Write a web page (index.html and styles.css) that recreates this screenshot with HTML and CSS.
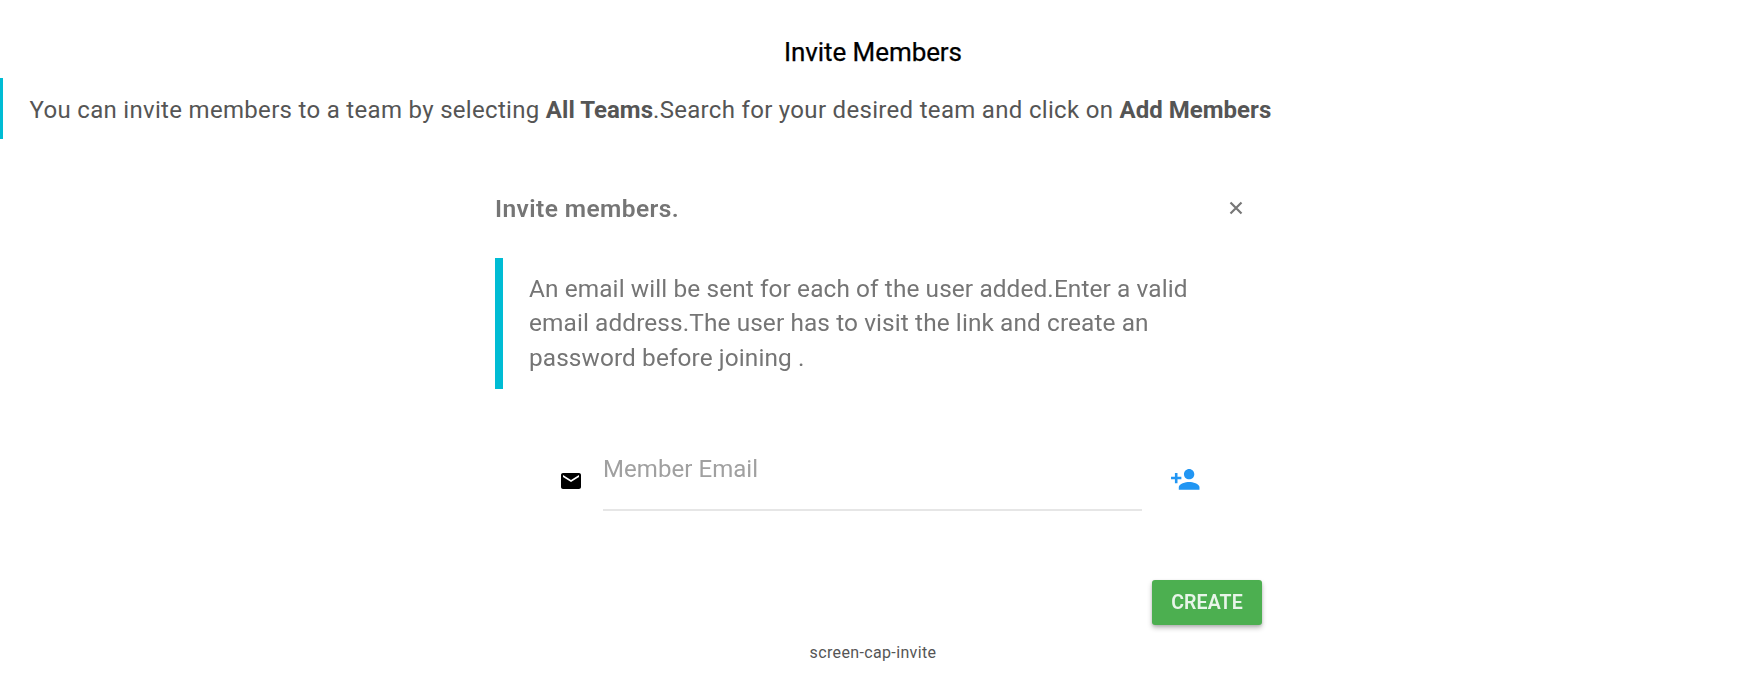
FILE: index.html
```html
<!DOCTYPE html>
<html lang="en">
<head>
<meta charset="utf-8">
<title>Invite Members</title>
<link rel="stylesheet" href="styles.css">
</head>
<body>
<main class="page">
  <h1 class="page-title">Invite Members</h1>
  <p class="intro"><span class="intro-text">You can invite members to a team by selecting <strong>All Teams</strong>.Search for your desired team and click on <strong>Add Members</strong></span></p>
  <section class="dialog">
    <header class="dialog-head">
      <h2 class="dialog-title"><span>Invite members.</span></h2>
      <svg class="close" viewBox="0 0 14 14"><path d="M1.500 1.500l11 11M12.500 1.500l-11 11"/></svg>
    </header>
    <p class="note"><span>An email will be sent for each of the user added.Enter a valid</span><br><span>email address.The user has to visit the link and create an</span><br><span>password before joining .</span></p>
    <div class="field-row">
      <svg class="mail" viewBox="2 4 20 16"><path d="M20 4H4c-1.100 0-1.990.9-1.990 2L2 18c0 1.100.9 2 2 2h16c1.100 0 2-.9 2-2V6c0-1.100-.9-2-2-2zm0 4l-8 5-8-5V6l8 5 8-5v2z"/></svg>
      <div class="field"><span>Member Email</span></div>
      <svg class="add" viewBox="1 4 22 16"><path d="M15 12c2.210 0 4-1.790 4-4s-1.790-4-4-4-4 1.790-4 4 1.790 4 4 4zm-9-2V7H4v3H1v2h3v3h2v-3h3v-2H6zm9 4c-2.670 0-8 1.340-8 4v2h16v-2c0-2.660-5.330-4-8-4z"/></svg>
    </div>
    <div class="actions"><button class="create">CREATE</button></div>
  </section>
  <p class="caption">screen-cap-invite</p>
</main>
</body>
</html>
```
FILE: styles.css
```css
* { box-sizing: border-box; }
body { margin: 0; background: #fff; color: #555; font-family: Roboto, "Liberation Sans", sans-serif; }
.page { display: flex; flex-direction: column; height: 690px; padding-top: 32px; }
h1, h2, p { margin: 0; }
.page-title { height: 46px; font-size: 26px; line-height: 40px; font-weight: 400; letter-spacing: -.08px; color: #000; text-align: center; -webkit-text-stroke: .25px #000; }
.intro { height: 61px; padding-left: 26.5px; border-left: 3px solid #00bcd4; font-size: 24px; line-height: 65px; letter-spacing: .31px; }
.intro strong { font-weight: 700; letter-spacing: .03px; }
.dialog { width: 767px; margin: 52px 0 0 495px; color: #757575; font-size: 24px; filter: blur(.4px); }
.dialog-head { display: flex; justify-content: space-between; height: 67px; padding: 1px 19px 0 0; }
.dialog-title { font-size: 24.5px; line-height: 34px; font-weight: 600; letter-spacing: .41px; }
.close { width: 14px; height: 14px; margin-top: 9px; fill: none; stroke: #777; stroke-width: 2.200; }
.note { height: 131px; padding: 14px 0 0 26px; border-left: 8px solid #00bcd4; font-size: 24.4px; line-height: 34.4px; letter-spacing: .1px; }
.field-row { display: flex; align-items: flex-start; height: 190px; padding: 62px 0 0 66px; }
.mail { width: 20px; height: 16px; margin-top: 22px; fill: #000; }
.field { width: 539px; height: 60px; margin: 0 29px 0 22px; border-bottom: 2px solid #e6e6e6; line-height: 37px; letter-spacing: .06px; color: #a0a0a0; }
.add { width: 28.5px; height: 20.7px; margin-top: 18px; fill: #2196f3; }
.actions { display: flex; justify-content: flex-end; padding-top: 1px; }
.create { width: 110px; height: 45px; padding: 0; border: 0; border-radius: 3px; background: #4caf50; color: #e8f5e9; font: 600 19.5px/46px Roboto, sans-serif; letter-spacing: .1px; box-shadow: 0 3px 5px rgba(0,0,0,.25), 0 1px 3px rgba(0,0,0,.12); }
.caption { margin-top: 16px; font-size: 16px; line-height: 24px; letter-spacing: .36px; text-align: center; }
```
